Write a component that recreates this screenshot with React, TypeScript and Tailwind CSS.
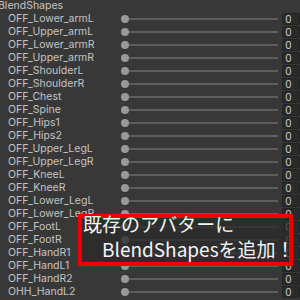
const shapes = [
  "OFF_Lower_armL",
  "OFF_Upper_armL",
  "OFF_Lower_armR",
  "OFF_Upper_armR",
  "OFF_ShoulderL",
  "OFF_ShoulderR",
  "OFF_Chest",
  "OFF_Spine",
  "OFF_Hips1",
  "OFF_Hips2",
  "OFF_Upper_LegL",
  "OFF_Upper_LegR",
  "OFF_KneeL",
  "OFF_KneeR",
  "OFF_Lower_LegL",
  "OFF_Lower_LegR",
  "OFF_FootL",
  "OFF_FootR",
  "OFF_HandR1",
  "OFF_HandL1",
  "OFF_HandR2",
  "OHH_HandL2",
];

function ShapeRow({ name }: { name: string }) {
  return (
    <div className="flex items-center h-[13px]">
      <span className="w-[123px] pl-[8px] text-[10.5px] text-[#c4c4c4] whitespace-nowrap">{name}</span>
      <div className="w-[8px] h-[8px] rounded-full bg-[#999999]" />
      <div className="w-[152px] h-[2px] bg-[#5e5e5e]" />
      <div className="ml-[4px] w-[18px] h-[12px] rounded-[2px] bg-[#2a2a2a] border border-[#242424] text-[10px] leading-[10px] text-[#d0d0d0] pl-[2px] flex items-center">
        0
      </div>
    </div>
  );
}

export default function App() {
  return (
    <div className="relative w-[300px] h-[300px] overflow-hidden bg-[#383838] font-['Inter','Liberation_Sans',sans-serif]">
      <div className="h-[12px] flex items-center -ml-[2px] text-[10.5px] text-[#c4c4c4]">BlendShapes</div>
      {shapes.map((s) => (
        <ShapeRow key={s} name={s} />
      ))}

      <div className="absolute left-[78px] top-[214px] w-[215px] h-[52px] border-4 border-[#f00000] bg-[#2a2a2a]/75">
        <div className="-mt-[7px] pl-[1px] text-[19px] leading-[25px] text-[#f4f4f4] whitespace-nowrap font-['Noto_Sans_CJK_JP',sans-serif]">
          <div>既存のアバターに</div>
          <div>　BlendShapesを追加！</div>
        </div>
      </div>
    </div>
  );
}
